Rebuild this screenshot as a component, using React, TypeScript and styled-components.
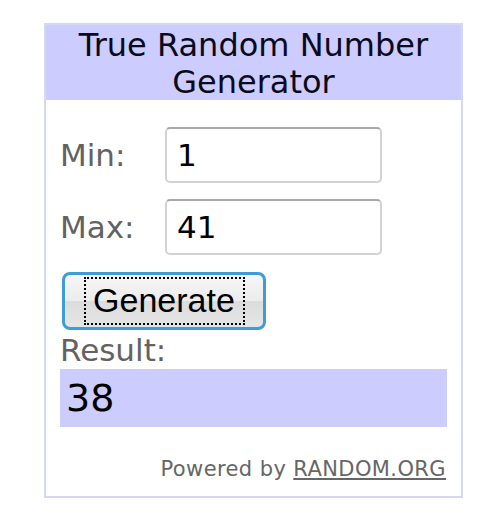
import React from "react";
import styled, { createGlobalStyle } from "styled-components";

const Global = createGlobalStyle`
  html, body { margin: 0; padding: 0; background: #ffffff; }
  body { font-family: "DejaVu Sans", Verdana, sans-serif; }
`;

const Widget = styled.div`
  margin: 23px 0 0 44px;
  width: 419px;
  height: 475px;
  box-sizing: border-box;
  border: 2px solid #d6d6f6;
  display: flex;
  flex-direction: column;
  background: #ffffff;
`;

const Header = styled.div`
  background: #ccccff;
  height: 75px;
  padding-top: 2px;
  box-sizing: border-box;
  text-align: center;
  font-size: 32px;
  line-height: 37px;
  color: #0a0a1a;
`;

const Body = styled.div`
  flex: 1;
  display: flex;
  flex-direction: column;
  padding: 27px 14px 0 14px;
`;

const Row = styled.div`
  display: flex;
  align-items: center;
  margin-bottom: 16px;
`;

const Label = styled.label`
  width: 105px;
  font-size: 31px;
  color: #626262;
`;

const Input = styled.div`
  width: 217px;
  height: 56px;
  box-sizing: border-box;
  border: 2px solid #d2d2d2;
  border-top-color: #a9a9a9;
  border-radius: 5px;
  padding-left: 10px;
  display: flex;
  align-items: center;
  font-size: 31px;
  color: #000000;
`;

const Button = styled.button`
  margin: 1px 0 0 2px;
  width: 204px;
  height: 58px;
  box-sizing: border-box;
  border: 3px solid #3f9cd4;
  border-radius: 8px;
  background: linear-gradient(#f6f6f6 0%, #ececec 50%, #dcdcdc 51%, #e6e6e6 100%);
  display: flex;
  align-items: center;
  justify-content: center;
  padding: 0;
  font-family: "Liberation Sans", Arial, sans-serif;
  font-size: 34px;
  color: #000000;
  align-self: flex-start;
`;

const Focus = styled.span`
  width: 161px;
  height: 48px;
  box-sizing: border-box;
  border: 2px dotted #000000;
  display: flex;
  align-items: center;
  justify-content: center;
  padding-bottom: 2px;
`;

const ResultLabel = styled.div`
  font-size: 31px;
  color: #626262;
  margin-top: 2px;
  line-height: 37px;
`;

const ResultBox = styled.div`
  background: #ccccff;
  height: 58px;
  display: flex;
  align-items: center;
  padding-left: 6px;
  font-size: 38px;
  color: #000000;
`;

const Footer = styled.div`
  margin-top: 30px;
  text-align: right;
  font-size: 21px;
  letter-spacing: 0.4px;
  color: #666666;
  padding-right: 1px;
`;

const Link = styled.span`
  text-decoration: underline;
`;

export default function App() {
  return (
    <>
      <Global />
      <Widget>
        <Header>
          True Random Number
          <br />
          Generator
        </Header>
        <Body>
          <Row>
            <Label>Min:</Label>
            <Input>1</Input>
          </Row>
          <Row>
            <Label>Max:</Label>
            <Input>41</Input>
          </Row>
          <Button>
            <Focus>Generate</Focus>
          </Button>
          <ResultLabel>Result:</ResultLabel>
          <ResultBox>38</ResultBox>
          <Footer>
            Powered by <Link>RANDOM.ORG</Link>
          </Footer>
        </Body>
      </Widget>
    </>
  );
}
